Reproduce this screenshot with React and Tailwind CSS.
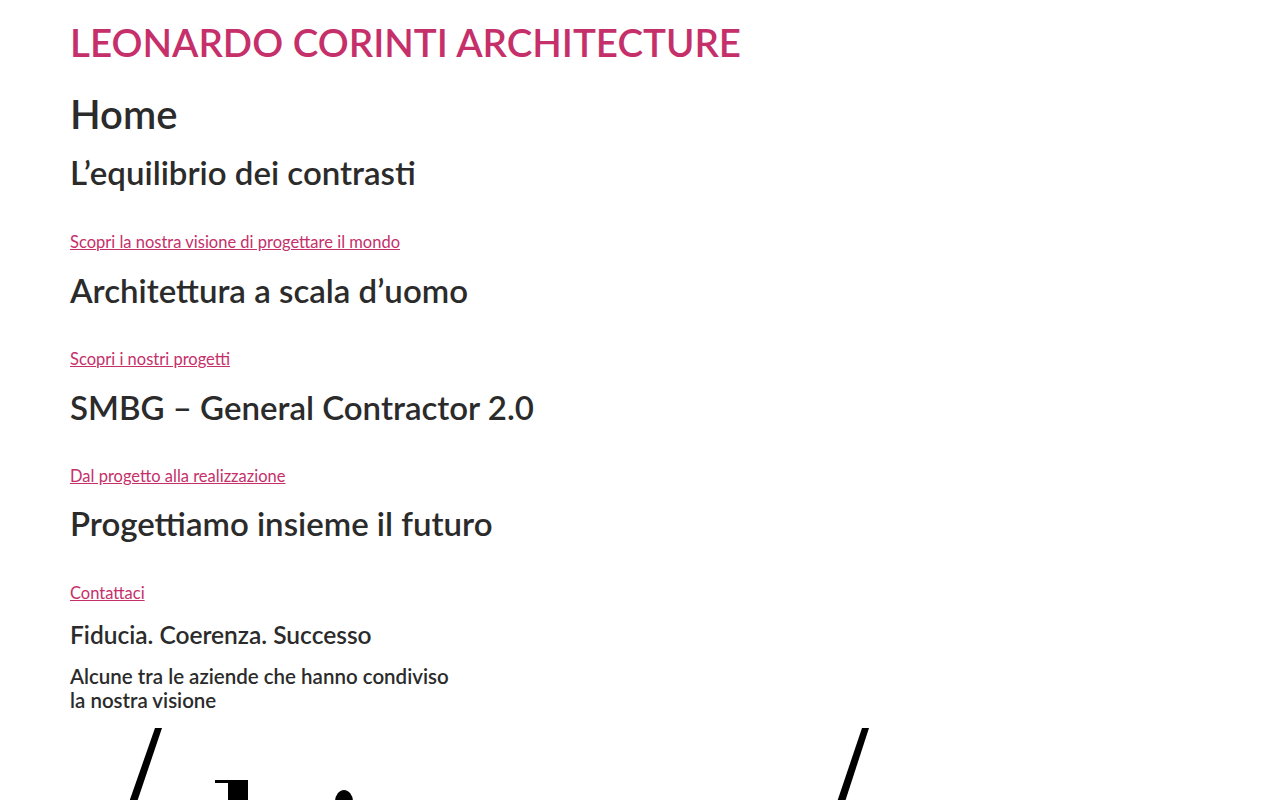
export default function App() {
  const font = { fontFamily: "Lato, 'Noto Sans', sans-serif" };
  return (
    <div className="min-h-[800px] bg-white text-[#2b2b2b] px-[70px] overflow-hidden h-[800px]" style={font}>
      <h1 className="pt-[18px] text-[38.5px] leading-[48px] font-semibold text-[#c5306a]">LEONARDO CORINTI ARCHITECTURE</h1>
      <h1 className="mt-[24px] text-[40px] leading-[48px] font-semibold">Home</h1>
      <h2 className="mt-[15px] text-[33px] leading-[38px] font-semibold">L’equilibrio dei contrasti</h2>
      <p className="mt-[39px] text-[16.5px] leading-[24px]"><a href="#" className="text-[#c5306a] underline">Scopri la nostra visione di progettare il mondo</a></p>
      <h2 className="mt-[17px] text-[33px] leading-[38px] font-semibold">Architettura a scala d’uomo</h2>
      <p className="mt-[38px] text-[16.5px] leading-[24px]"><a href="#" className="text-[#c5306a] underline">Scopri i nostri progetti</a></p>
      <h2 className="mt-[17px] text-[33px] leading-[38px] font-semibold">SMBG – General Contractor 2.0</h2>
      <p className="mt-[38px] text-[16.5px] leading-[24px]"><a href="#" className="text-[#c5306a] underline">Dal progetto alla realizzazione</a></p>
      <h2 className="mt-[16px] text-[33px] leading-[38px] font-semibold">Progettiamo insieme il futuro</h2>
      <p className="mt-[39px] text-[16.5px] leading-[24px]"><a href="#" className="text-[#c5306a] underline">Contattaci</a></p>
      <h3 className="mt-[15px] text-[24.5px] leading-[29px] font-semibold">Fiducia. Coerenza. Successo</h3>
      <h4 className="mt-[15px] text-[20.5px] leading-[24px] font-semibold">Alcune tra le aziende che hanno condiviso<br />la nostra visione</h4>
      <svg className="mt-[16px] block" width="900" height="80" viewBox="0 0 900 80">
        <polygon points="85,0 92,0 65,80 57,80" fill="#000" />
        <polygon points="145,52 178,52 178,80 158,80 158,55 145,55" fill="#000" />
        <ellipse cx="274" cy="74" rx="9" ry="12" fill="#000" />
        <polygon points="792,0 799,0 773,80 765,80" fill="#000" />
      </svg>
    </div>
  );
}
